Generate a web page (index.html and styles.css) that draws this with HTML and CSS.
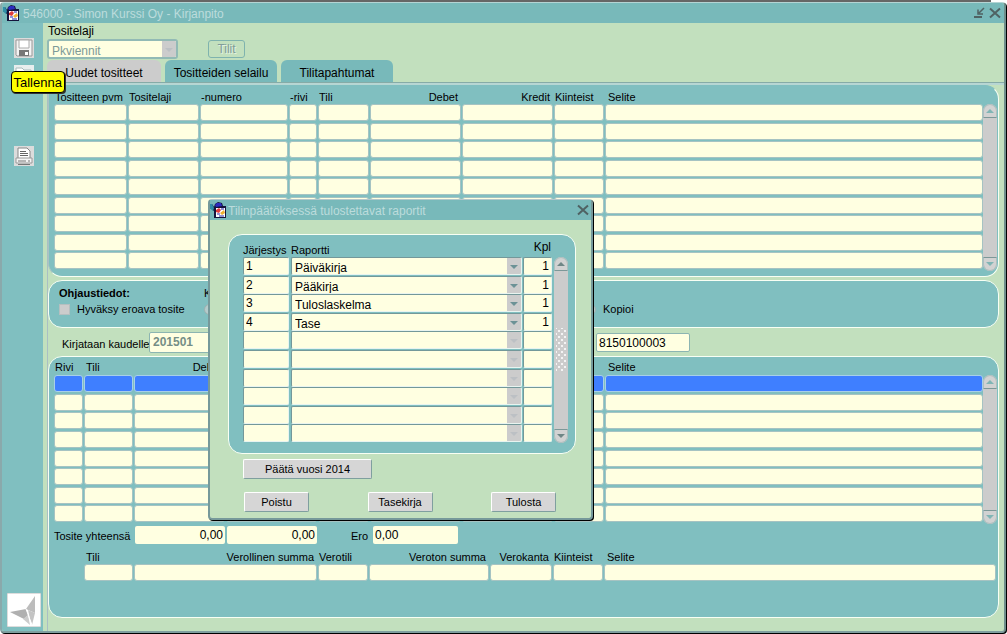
FILE: index.html
```html
<!DOCTYPE html>
<html lang="fi">
<head>
<meta charset="utf-8">
<title>546000 - Simon Kurssi Oy - Kirjanpito</title>
<link rel="stylesheet" href="styles.css">
<script src="app.js" defer></script>
</head>
<body>
<svg class="defs" aria-hidden="true">
  <symbol id="app-icon" viewBox="0 0 16 16">
    <path d="M0 2h2l2 3 1-3 3-2 4 1 1 3h3v12H4V9L0 6z" fill="#14143c"/>
    <path d="M0 2h2l2 4-1 3-3-3z" fill="#2f8fa8"/>
    <path d="M5 3l2-2h4l1 3-6 1z" fill="#2c2cc0"/>
    <path d="M6 6h9v9H6z" fill="#fff"/>
    <path d="M6 8l3-2 2 2-2 3-3-1z" fill="#e03c3c"/>
    <path d="M10 11l4-3 1 3-3 2z" fill="#f0b030"/>
    <path d="M7 12h3M11 7h3M9 14h5" stroke="#2424a8" fill="none"/>
  </symbol>
  <symbol id="close-icon" viewBox="0 0 12 12">
    <path d="M1 1.500l10 9M11 1.500l-10 9" stroke="#4f6263" stroke-width="2" fill="none"/>
  </symbol>
</svg>
<div class="window">
  <header class="titlebar">
    <svg class="app-icon" aria-hidden="true"><use href="#app-icon"/></svg>
    <h1>546000 - Simon Kurssi Oy - Kirjanpito</h1>
    <button class="title-btn" aria-label="Pienennä"><svg width="12" height="12" viewBox="0 0 12 12"><path d="M1 10h8" stroke="#4f6263" stroke-width="2"/><path d="M11 1L6 6M5 2.500v4.500h5" stroke="#4f6263" stroke-width="1.500" fill="none"/></svg></button>
    <button class="title-btn" aria-label="Sulje"><svg width="12" height="12"><use href="#close-icon"/></svg></button>
  </header>
  <div class="workspace">
    <nav class="sidebar">
      <div class="tool-wrap">
        <button class="tool" aria-label="Tallenna"><svg width="20" height="20" viewBox="0 0 20 20"><path d="M2 2h16v16H3l-1-1z" fill="#f4f4f4" stroke="#999"/><path d="M5 2h10v8H5z" fill="#fff" stroke="#aaa"/><path d="M5 12h10v6H5z" fill="#777"/><path d="M11 14h3v3h-3z" fill="#fff"/></svg></button>
        <span class="tooltip" role="tooltip">Tallenna</span>
      </div>
      <button class="tool" aria-label="Avaa"><svg width="20" height="20" viewBox="0 0 20 20"><path d="M0 0h20v20H0z" fill="#e8eeee"/><path d="M2 3h6l2 2h7v10H2z" fill="#fff" stroke="#aabcbc"/></svg></button>
      <button class="tool print" aria-label="Tulosta"><svg width="20" height="20" viewBox="0 0 20 20"><path d="M4 2h9l3 3v8H4z" fill="#fff" stroke="#888"/><path d="M6 5.500h6M6 7.500h8M6 9.500h8" stroke="#666"/><path d="M2 12h16v5H2z" fill="#f4f4f4" stroke="#999"/><path d="M4 15h8M14 15h2M4 18.500h12" stroke="#777"/></svg></button>
      <svg class="logo" viewBox="0 0 34 34" aria-hidden="true"><path d="M0 0h34v34H0z" fill="#fff" stroke="#bbb"/><path d="M28 3v17l-9-4z" fill="#bcbcbc"/><path d="M3 19l16-3 2 6-4 4z" fill="#b0b0b0"/><path d="M21 17l7 3-3 12-2-6z" fill="#c4c4c4"/><path d="M21 22l2 10-7-6z" fill="#ccc"/><path d="M19 16l6 16" stroke="#fff"/></svg>
    </nav>
    <main class="main">
      <div class="toolbar">
        <div class="type-field">
          <label for="laji">Tositelaji</label>
          <span class="drop disabled"><select id="laji" disabled><option>Pkviennit</option></select></span>
        </div>
        <button class="tilit">Tilit</button>
      </div>
      <div class="tabs" role="tablist">
        <button role="tab" aria-selected="true">Uudet tositteet</button>
        <button role="tab">Tositteiden selailu</button>
        <button role="tab">Tilitapahtumat</button>
      </div>
      <div class="tabpanel">
        <section class="panel vouchers">
          <div class="grid-wrap">
            <table class="grid" data-rows="9">
              <colgroup><col class="w74"><col class="w72"><col class="w89"><col class="w29"><col class="w52"><col class="w92"><col class="w92"><col class="w51"><col></colgroup>
              <thead><tr><th>Tositteen pvm</th><th>Tositelaji</th><th>-numero</th><th>-rivi</th><th>Tili</th><th class="num">Debet</th><th class="num">Kredit</th><th>Kiinteist</th><th class="wide">Selite</th></tr></thead>
              <tbody></tbody>
            </table>
            <div class="scroll pale"><button class="up" aria-label="Ylös"></button><button class="down" aria-label="Alas"></button></div>
          </div>
        </section>
        <section class="panel control">
          <div class="control-left">
            <h2>Ohjaustiedot:</h2>
            <label><input type="checkbox" disabled> Hyväksy eroava tosite</label>
          </div>
          <div class="control-mid">
            <span>K</span>
            <input type="radio" name="tapa" aria-label="K" disabled>
          </div>
          <label class="kopioi"><input type="radio" name="tapa" disabled> Kopioi</label>
        </section>
        <div class="period">
          <label for="kausi">Kirjataan kaudelle</label>
          <input id="kausi" class="kausi" value="201501">
          <input class="viite" aria-label="Viite" value="8150100003">
        </div>
        <section class="panel entries">
          <div class="grid-wrap">
            <table class="grid" data-rows="8" data-selected="0">
              <colgroup><col class="w30"><col class="w50"><col class="w92"><col class="w92"><col class="w52"><col class="w92"><col class="w92"><col class="w51"><col></colgroup>
              <thead><tr><th>Rivi</th><th class="indent">Tili</th><th class="num">Debet</th><th></th><th></th><th></th><th></th><th></th><th class="wide">Selite</th></tr></thead>
              <tbody></tbody>
            </table>
            <div class="scroll pale"><button class="up" aria-label="Ylös"></button><button class="down" aria-label="Alas"></button></div>
          </div>
          <div class="totals">
            <label for="summa">Tosite yhteensä</label>
            <input id="summa" class="num" value="0,00">
            <input class="num" aria-label="Kredit yhteensä" value="0,00">
            <label for="ero" class="ero">Ero</label>
            <input id="ero" class="ero-value" value="0,00">
          </div>
          <table class="grid vat" data-rows="1">
            <colgroup><col class="w50"><col class="w184"><col class="w51"><col class="w121"><col class="w63"><col class="w51"><col></colgroup>
            <thead><tr><th class="indent">Tili</th><th class="num">Verollinen summa</th><th>Verotili</th><th class="num">Veroton summa</th><th class="num">Verokanta</th><th>Kiinteist</th><th class="wide">Selite</th></tr></thead>
            <tbody></tbody>
          </table>
        </section>
      </div>
    </main>
  </div>
</div>
<div class="dialog" role="dialog" aria-labelledby="dlg">
  <header class="titlebar">
    <svg class="app-icon" aria-hidden="true"><use href="#app-icon"/></svg>
    <h2 id="dlg">Tilinpäätöksessä tulostettavat raportit</h2>
    <button class="title-btn" aria-label="Sulje"><svg width="12" height="12"><use href="#close-icon"/></svg></button>
  </header>
  <div class="dialog-body">
    <section class="panel reports">
      <div class="grid-wrap">
        <table class="grid report-grid">
          <colgroup><col class="w48"><col><col class="w31"></colgroup>
          <thead><tr><th>Järjestys</th><th class="indent">Raportti</th><th class="kpl">Kpl</th></tr></thead>
          <tbody></tbody>
        </table>
        <div class="scroll"><button class="up" aria-label="Ylös"></button><span class="grip"></span><button class="down" aria-label="Alas"></button></div>
      </div>
    </section>
    <button class="btn btn-wide">Päätä vuosi 2014</button>
    <div class="actions">
      <button class="btn">Poistu</button>
      <button class="btn">Tasekirja</button>
      <button class="btn">Tulosta</button>
    </div>
  </div>
</div>
</body>
</html>
```
FILE: styles.css
```css
* { box-sizing: border-box; }

:root {
  --teal: #80bfc0;
  --title: #78b9ba;
  --green: #c2e0be;
  --cream: #ffffe1;
  --grey: #cccccc;
  --edge: #6f9696;
  --cell-edge: #a6c3c2;
}

body {
  margin: 0;
  min-height: 100vh;
  display: flex;
  flex-direction: column;
  background: linear-gradient(#666, #666) 0 0 / calc(100% - 16px) 2px no-repeat #fff;
  padding: 2px 1px 1px 0;
  color: #000;
  font: 11px/14px "Liberation Sans", Arial, sans-serif;
  position: relative;
}

button, input, select {
  font: inherit;
  color: inherit;
  margin: 0;
  padding: 0;
  border: 0;
  background: none;
}

h1, h2 { margin: 0; font: inherit; }

.defs { position: absolute; width: 0; height: 0; }

.window {
  flex: 1;
  display: flex;
  flex-direction: column;
  background: var(--green);
  border: 1px solid var(--edge);
  border-top-color: #b4d4d4;
  border-left: 2px solid #8aa9ab;
  border-right: 2px solid #6f8f8c;
  border-bottom: 2px solid #7f9f9f;
  border-radius: 4px;
  box-shadow: 1px 1px 0 #000;
  overflow: hidden;
}

.titlebar {
  display: flex;
  align-items: center;
  height: 20px;
  gap: 4px;
  padding: 0 3px 0 1px;
  background: var(--title);
  color: #bcdcdc;
  font-size: 12px;
}

.titlebar h1, .titlebar h2 { flex: 1; padding-top: 1px; white-space: nowrap; }
.app-icon { width: 16px; height: 16px; flex: none; }
.title-btn { width: 12px; height: 12px; }
.title-btn svg { display: block; }

.workspace { flex: 1; display: flex; }

.sidebar {
  width: 41px;
  padding: 15px 0 4px 2px;
  display: flex;
  flex-direction: column;
  align-items: center;
  background: var(--teal);
}

.tool { display: block; width: 20px; height: 20px; background: #dcdcdc; }
.tool svg { display: block; }
.tool-wrap { position: relative; margin-bottom: 7px; }
.print { margin-top: 61px; }

.tooltip {
  position: absolute;
  left: -3px;
  top: 33px;
  z-index: 2;
  padding: 4px 2px 2px 2px;
  background: #ff0;
  border: 1px solid #000;
  border-radius: 4px;
  box-shadow: 1px 1px 0 #333;
  font-size: 13px;
  line-height: 14px;
}

.logo { width: 34px; height: 34px; margin-top: auto; }

.main {
  flex: 1;
  min-width: 0;
  display: flex;
  flex-direction: column;
  padding-left: 4px;
}

.toolbar { display: flex; align-items: flex-end; gap: 30px; height: 37px; padding-bottom: 1px; }
.type-field { display: flex; flex-direction: column; gap: 1px; width: 131px; font-size: 12px; }
.type-field label { padding-left: 1px; }
.type-field .drop { height: 20px; border: 2px solid #92bab5; border-radius: 3px; color: #7d9a97; }

.tilit {
  width: 37px;
  height: 18px;
  margin-bottom: 1px;
  border: 1px solid #7fb3ae;
  border-radius: 3px;
  color: #819d99;
  font-size: 12px;
  text-shadow: 1px 1px 0 #e4f2e0;
}

.tabs { display: flex; gap: 4px; height: 22px; }
.tabs button {
  width: 112px;
  padding-top: 3px;
  background: var(--title);
  border-radius: 6px 6px 0 0;
  font-size: 12px;
}
.tabs button[aria-selected="true"] { width: 114px; background: var(--grey); }

.tabpanel {
  flex: 1;
  display: flex;
  flex-direction: column;
  padding: 0 5px 13px 0;
  border-top: 1px solid #86aba7;
  border-left: 1px solid #a9bfc4;
  box-shadow: inset 0 2px 0 #b7d6d3;
}

.panel {
  background: var(--teal);
  border: 1px solid #f8fff4;
  border-radius: 14px;
}

.vouchers { margin-top: 2px; padding: 0 1px 5px 5px; border-top-color: var(--teal); border-top-left-radius: 0; border-left-color: #a9c4c4; }
.vouchers .grid { height: 185px; }

.grid-wrap { display: flex; align-items: flex-end; }
.grid { flex: 1; width: 100%; table-layout: fixed; border-collapse: collapse; }
.grid th, .grid td { padding: 0; }
.grid th {
  height: 18px;
  padding: 4px 0 0 1px;
  font-weight: normal;
  text-align: left;
  vertical-align: top;
  white-space: nowrap;
}
.grid th.num { text-align: right; padding-right: 4px; }
.grid th.indent { padding-left: 2px; }
.grid th.wide { padding-left: 3px; }
.grid td { padding-right: 1px; vertical-align: top; }
.grid td:last-child { padding-right: 0; }
.grid input {
  display: block;
  width: 100%;
  height: 17px;
  padding: 0 2px;
  background: var(--cream);
  border: 1px solid var(--cell-edge);
  border-radius: 3px;
}
.grid tr.selected input { background: #3f7fff; border-color: #a8cfe8; }

.w29 { width: 29px; }
.w30 { width: 30px; }
.w31 { width: 31px; }
.w48 { width: 48px; }
.w50 { width: 50px; }
.w51 { width: 51px; }
.w52 { width: 52px; }
.w63 { width: 63px; }
.w72 { width: 72px; }
.w74 { width: 74px; }
.w89 { width: 89px; }
.w92 { width: 92px; }
.w121 { width: 121px; }
.w184 { width: 184px; }

.scroll {
  flex: none;
  width: 14px;
  height: 167px;
  display: flex;
  flex-direction: column;
  justify-content: space-between;
  background: var(--grey);
  border-radius: 7px;
}
.scroll button {
  display: grid;
  place-items: center;
  height: 14px;
  background: #d2d2d2;
  border: 1px solid #aebfbf;
}
.scroll .up { border-radius: 7px 7px 0 0; border-bottom-color: #7c9898; }
.scroll .down { border-radius: 0 0 7px 7px; border-top-color: #7c9898; }
.scroll button::before { content: ""; border: 4px solid transparent; }
.scroll .up::before { border-top: 0; border-bottom-color: #6f8686; }
.scroll .down::before { border-bottom: 0; border-top-color: #6f8686; }
.scroll.pale .up::before { border-bottom-color: #80b5b5; }
.scroll.pale .down::before { border-top-color: #80b5b5; }
.grip {
  width: 10px;
  height: 44px;
  margin: 0 auto;
  background: radial-gradient(circle, #f4f4f4 1px, transparent 1px) 0 0 / 6px 6px, radial-gradient(circle, #f4f4f4 1px, transparent 1px) 3px 3px / 6px 6px;
}

.control { display: flex; height: 48px; margin-top: 3px; padding: 5px 10px; }
.control h2 { font-weight: bold; }
.control label { display: flex; align-items: center; gap: 7px; }
.control-left { width: 145px; display: flex; flex-direction: column; gap: 2px; white-space: nowrap; }
.control-left input { appearance: none; width: 11px; height: 11px; background: #ccc; border: 1px solid #b5bfc0; }
.control-mid { width: 381px; display: flex; flex-direction: column; gap: 4px; }
.control-mid input, .kopioi input { appearance: none; width: 11px; height: 11px; border: 1px solid #9fb0b0; border-radius: 6px; background: #b4cccc; }
.kopioi { align-self: flex-start; margin-top: 16px; }

.period { display: flex; align-items: center; height: 28px; padding: 0 0 0 14px; }
.period label { width: 87px; padding-top: 3px; white-space: nowrap; }
.period input { background: var(--cream); border: 1px solid #8cb5b2; border-radius: 2px; padding-left: 3px; }
.period .kausi { flex: none; width: 90px; height: 21px; color: #758e86; font-size: 12px; font-weight: bold; }
.period .viite { width: 94px; height: 19px; margin-left: 357px; padding: 2px 0 0 2px; font-size: 12px; }

.entries { flex: 1; padding: 0 1px 0 5px; }
.entries .grid-wrap .grid { height: 167px; }
.entries .scroll { height: 149px; }
.entries .grid-wrap .grid th { padding-top: 3px; }

.totals { display: flex; align-items: center; height: 18px; margin-top: 2px; gap: 2px; }
.totals label { width: 79px; padding-top: 2px; white-space: nowrap; }
.totals input { width: 90px; height: 18px; padding: 0 2px; background: var(--cream); border-radius: 2px; font-size: 12px; }
.totals input.num { text-align: right; }
.totals label.ero { width: 52px; padding-left: 32px; }
.totals input.ero-value { width: 85px; }

.entries .vat { width: calc(100% - 31px); height: 37px; margin: 2px 1px 0 30px; }

.dialog {
  position: absolute;
  left: 208px;
  top: 199px;
  width: 385px;
  background: var(--green);
  border: 2px solid #76999a;
  border-top: 1px solid #b5c8cc;
  border-radius: 4px;
  box-shadow: 1px 1px 0 #000;
}
.dialog .titlebar { padding: 0 2px 0 0; gap: 2px; }
.dialog-body { padding: 14px 15px 6px 18px; }

.reports { padding: 5px 7px 10px 14px; }
.reports .grid { height: 203px; }
.reports .grid th { height: 17px; padding-top: 3px; padding-left: 0; }
.reports .grid th.kpl { padding: 0 3px 0 0; text-align: right; font-size: 12px; }
.reports .grid td { padding-right: 2px; }
.reports .grid td:nth-child(2) { padding-right: 1px; }
.reports .grid input,
.reports .drop {
  height: 18px;
  border: 1px solid #73989a;
  border-right-color: #e8f4f0;
  border-bottom-color: #e8f4f0;
  border-radius: 2px;
  font-size: 12px;
}
.reports input.count { text-align: right; }
.reports .scroll { height: 186px; }

.drop { position: relative; display: block; background: var(--cream); overflow: hidden; }
.drop select { display: block; width: 100%; height: 100%; padding: 3px 16px 0 3px; appearance: none; opacity: 1; outline: 0; }
.drop::after {
  content: "";
  position: absolute;
  right: 0;
  top: 0;
  width: 14px;
  height: 100%;
  pointer-events: none;
  background: var(--grey);
}
.drop::before {
  content: "";
  position: absolute;
  z-index: 1;
  right: 3px;
  top: 7px;
  border: 4px solid transparent;
  border-top-color: #6c9296;
  border-bottom: 0;
  pointer-events: none;
}
.drop.disabled::before { border-top-color: #bcc0c4; }

.btn {
  width: 65px;
  height: 20px;
  background: #d6d6d6;
  border: 1px solid #fff;
  border-right-color: #7f9f9f;
  border-bottom-color: #7f9f9f;
  border-radius: 2px;
}
.btn-wide { display: block; width: 129px; margin: 5px 0 13px 15px; }
.actions { display: flex; justify-content: space-between; padding: 0 20px 0 16px; }
```
FILE: app.js
```js
const reports = [["1", "Päiväkirja"], ["2", "Pääkirja"], ["3", "Tuloslaskelma"], ["4", "Tase"]];
const REPORT_ROWS = 10;

// Fill the entry grids with one empty input per column.
document.querySelectorAll("table[data-rows]").forEach((table) => {
  const names = [...table.querySelectorAll("th")].map((th) => th.textContent || "Summa");
  for (let r = 0; r < Number(table.dataset.rows); r++) {
    const row = table.tBodies[0].insertRow();
    if (table.dataset.selected === String(r)) row.className = "selected";
    for (const name of names) {
      row.insertCell().innerHTML = `<input aria-label="${name} ${r + 1}">`;
    }
  }
});

// Report list of the dialog.
const body = document.querySelector(".report-grid tbody");
for (let r = 0; r < REPORT_ROWS; r++) {
  const [order, name] = reports[r] || ["", ""];
  const off = name ? "" : "disabled";
  body.insertRow().innerHTML = `
    <td><input aria-label="Järjestys ${r + 1}" value="${order}"></td>
    <td><span class="drop ${off}"><select aria-label="Raportti ${r + 1}" ${off}><option>${name}</option></select></span></td>
    <td><input class="count" aria-label="Kpl ${r + 1}" value="${name ? 1 : ""}"></td>`;
}
```
